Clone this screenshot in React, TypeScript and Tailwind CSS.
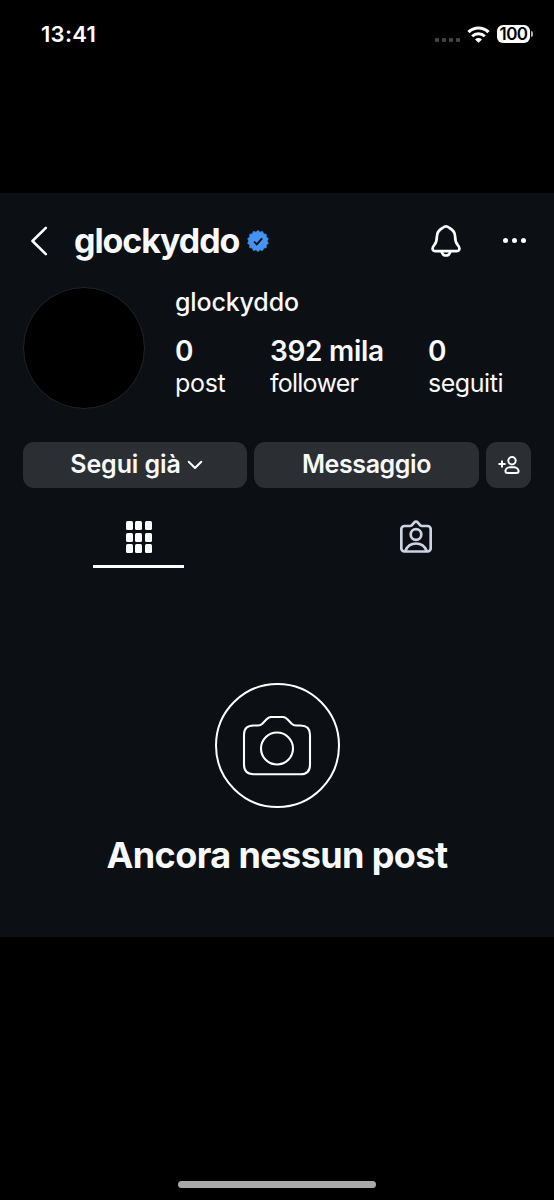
import React, { useState } from "react";

interface Stat {
  value: string;
  label: string;
  width: string;
  tracking: string;
}

const stats: Stat[] = [
  {
    value: "0",
    label: "post",
    width: "w-[95px]",
    tracking: "tracking-[-0.3px]",
  },
  {
    value: "392 mila",
    label: "follower",
    width: "w-[158px]",
    tracking: "tracking-[-0.75px]",
  },
  {
    value: "0",
    label: "seguiti",
    width: "w-[90px]",
    tracking: "tracking-[-0.45px]",
  },
];

const badgePoints = Array.from({ length: 28 }, (_, i) => {
  const r = i % 2 === 0 ? 10.6 : 9;
  const a = (i * Math.PI) / 14;
  return `${(11 + r * Math.sin(a)).toFixed(2)},${(11 - r * Math.cos(a)).toFixed(2)}`;
}).join(" ");

const VerifiedBadge = () => (
  <svg className="w-[22px] h-[22px]" viewBox="0 0 22 22">
    <polygon
      points={badgePoints}
      fill="#4494f4"
      stroke="#4494f4"
      strokeWidth="0.8"
      strokeLinejoin="round"
    />
    <path
      d="M7 11.6l2.8 2.7 5.3-5.9"
      fill="none"
      stroke="#0c1014"
      strokeWidth="1.9"
    />
  </svg>
);

const WifiIcon = () => (
  <svg className="w-[23px] h-[17px]" viewBox="0 0 23 17" fill="none">
    <path d="M1.5 6.1a14.2 14.2 0 0 1 20 0" stroke="white" strokeWidth="3.2" />
    <path d="M5.2 10.2a9 9 0 0 1 12.6 0" stroke="white" strokeWidth="3" />
    <path d="M11.5 16.8L8 13.4a5 5 0 0 1 7 0z" fill="white" />
  </svg>
);

const StatusBar = () => (
  <div className="flex h-[193px] items-start justify-between pl-[41px] pr-[21px] pt-[19px] text-white">
    <span className="text-[22px] leading-[30px] font-semibold tracking-[0.3px]">
      13:41
    </span>
    <div className="flex h-[30px] items-center">
      <div className="mr-[7px] mt-[11px] flex gap-[3px]">
        {[0, 1, 2, 3].map((dot) => (
          <span key={dot} className="h-1 w-1 rounded-[1px] bg-[#444444]" />
        ))}
      </div>
      <WifiIcon />
      <div className="ml-[7px] flex h-[18px] w-[33px] items-center justify-center rounded-[6px] bg-white text-[17px] leading-[18px] font-semibold tracking-[-0.6px] text-black">
        100
      </div>
      <span className="ml-px h-[6px] w-[2px] rounded-r-full bg-[#b0b0b0]" />
    </div>
  </div>
);

const Header = () => (
  <div className="flex h-[94px] items-center pl-[30px] pr-[28px] pt-px">
    <button className="cursor-pointer">
      <svg className="w-[18px] h-[30px]" viewBox="0 0 18 30" fill="none">
        <path
          d="M15.800 1.800L2.500 15l13.300 13.200"
          stroke="white"
          strokeWidth="2.6"
          strokeLinecap="round"
          strokeLinejoin="round"
        />
      </svg>
    </button>
    <h1 className="ml-[26px] mt-px w-[166px] text-[34px] leading-[44px] font-bold tracking-[-1.1px] whitespace-nowrap">
      glockyddo
    </h1>
    <div className="ml-[7px]">
      <VerifiedBadge />
    </div>
    <button className="ml-auto cursor-pointer">
      <svg className="w-[30px] h-[34px]" viewBox="0 0 30 34" fill="none">
        <path
          d="M15 2.400c-1.200 0-2.200.6-3.600 1.600C8 6 5.900 8.500 5.900 12.400c0 4.600-.8 6.600-2.700 8.800-2.600 2.800-2 6 1.400 6h20.800c3.400 0 4-3.200 1.400-6-1.900-2.200-2.700-4.200-2.700-8.800 0-3.900-2.100-6.400-5.500-8.400-1.400-1-2.400-1.600-3.600-1.600z"
          stroke="white"
          strokeWidth="2.7"
          strokeLinejoin="round"
        />
        <path
          d="M10.600 27.500c.6 2.500 2.300 4 4.400 4s3.800-1.500 4.400-4"
          stroke="white"
          strokeWidth="2.7"
        />
      </svg>
    </button>
    <button className="ml-[42px] flex cursor-pointer gap-[4px]">
      <span className="h-[5px] w-[5px] rounded-full bg-white" />
      <span className="h-[5px] w-[5px] rounded-full bg-white" />
      <span className="h-[5px] w-[5px] rounded-full bg-white" />
    </button>
  </div>
);

const ProfileInfo = () => (
  <div className="flex h-[155px] pl-[23px]">
    <div className="h-[122px] w-[122px] shrink-0 rounded-full border border-[#212427] bg-black" />
    <div className="ml-[30px]">
      <p className="text-[25px] leading-[30px] font-medium tracking-[-0.15px]">
        glockyddo
      </p>
      <div className="mt-[18px] flex">
        {stats.map((stat) => (
          <div key={stat.label} className={stat.width}>
            <p className="text-[28px] leading-[32px] font-semibold tracking-[-0.3px] whitespace-nowrap">
              {stat.value}
            </p>
            <p className={`text-[25px] leading-[32px] ${stat.tracking}`}>
              {stat.label}
            </p>
          </div>
        ))}
      </div>
    </div>
  </div>
);

const Actions = () => (
  <div className="flex h-[46px] gap-[7px] px-[23px] text-[25px] font-semibold">
    <button className="flex h-[46px] w-[224px] cursor-pointer items-center justify-center gap-[6px] rounded-[11px] bg-[#2b2f34] pl-[3px]">
      <span className="tracking-[-0.1px]">Segui già</span>
      <svg className="w-4 h-[10px]" viewBox="0 0 16 10" fill="none">
        <path
          d="M1.700 1.700L8 8l6.300-6.300"
          stroke="white"
          strokeWidth="2"
          strokeLinecap="round"
          strokeLinejoin="round"
        />
      </svg>
    </button>
    <button className="h-[46px] w-[225px] cursor-pointer rounded-[11px] bg-[#2b2f34] tracking-[-0.4px]">
      Messaggio
    </button>
    <button className="flex h-[46px] w-[45px] cursor-pointer items-center justify-center rounded-[11px] bg-[#2b2f34]">
      <svg className="w-[22px] h-[18px]" viewBox="0 0 22 18" fill="none">
        <g stroke="white" strokeWidth="2" strokeLinecap="round">
          <circle cx="14" cy="4.700" r="3.700" />
          <path d="M14 11c-3.700 0-6.600 1.700-6.600 4 0 1.300.8 1.900 2 1.900h9.200c1.200 0 2-.6 2-1.900 0-2.300-2.900-4-6.600-4z" />
          <path d="M1.200 8h5.600M4 5.200v5.600" />
        </g>
      </svg>
    </button>
  </div>
);

interface TabsProps {
  active: string;
  onChange: (tab: string) => void;
}

const Tabs = ({ active, onChange }: TabsProps) => (
  <div className="flex h-[80px]">
    <button
      onClick={() => onChange("grid")}
      className="flex w-[277px] cursor-pointer flex-col items-center justify-start pt-[33px]"
    >
      <span className="grid grid-cols-3 gap-x-[2.5px] gap-y-[2.5px]">
        {Array.from({ length: 9 }, (_, i) => (
          <span key={i} className="h-[9px] w-[7px] rounded-[1.5px] bg-white" />
        ))}
      </span>
      {active === "grid" && (
        <span className="mt-[12px] h-[3px] w-[91px] bg-white" />
      )}
    </button>
    <button
      onClick={() => onChange("tagged")}
      className="flex w-[277px] cursor-pointer flex-col items-center justify-start pt-[32px]"
    >
      <svg className="w-[32px] h-[33px]" viewBox="0 0 32 33" fill="none">
        <g stroke="#ccd3e3" strokeWidth="2.700" strokeLinejoin="round">
          <path d="M4.500 6h5.300c1 0 1.700-.4 2.400-1.200l1.900-2.200c1.100-1.300 2.700-1.300 3.800 0l1.900 2.200c.7.800 1.400 1.200 2.400 1.200h5.300a3.200 3.200 0 0 1 3.200 3.200v19.100a3.200 3.200 0 0 1-3.200 3.200H4.500a3.200 3.200 0 0 1-3.200-3.200V9.200A3.200 3.200 0 0 1 4.500 6z" />
          <circle cx="16" cy="14.500" r="5.300" />
          <path d="M5.200 31c1.900-4.700 6-7.500 10.800-7.500s8.900 2.800 10.800 7.500" />
        </g>
      </svg>
      {active === "tagged" && (
        <span className="mt-[11px] h-[3px] w-[91px] bg-white" />
      )}
    </button>
  </div>
);

const EmptyState = () => (
  <div className="flex flex-col items-center pt-[115px]">
    <div className="flex h-[125px] w-[125px] items-center justify-center rounded-full border-2 border-white">
      <svg className="w-[70px] h-[60px]" viewBox="0 0 70 60" fill="none">
        <g stroke="white" strokeWidth="2.100">
          <path d="M11.500 9.500h4.500c2 0 3-.6 4.300-1.800l4.300-4.400C26.300 1.600 27.300 1 29.300 1h11.400c2 0 3 .6 4.700 2.300l4.300 4.400c1.300 1.200 2.300 1.800 4.300 1.800h4.500c6.300 0 9.500 3.200 9.500 9.200v30c0 6.300-3.200 9.500-9.500 9.500h-47c-6.300 0-9.500-3.200-9.500-9.500v-30c0-6 3.200-9.200 9.500-9.200z" />
          <circle cx="35" cy="32.500" r="16" />
        </g>
      </svg>
    </div>
    <h2 className="mt-[22px] text-[36px] leading-[50px] font-bold tracking-[-0.6px] whitespace-nowrap">
      Ancora nessun post
    </h2>
  </div>
);

const App = () => {
  const [activeTab, setActiveTab] = useState("grid");

  return (
    <div className="flex h-[1200px] w-[554px] flex-col overflow-hidden bg-black font-['Inter',sans-serif]">
      <StatusBar />

      {/* Profile */}
      <main className="h-[744px] shrink-0 bg-[#0c1014] text-[#f8f9fb]">
        <Header />
        <ProfileInfo />
        <Actions />
        <Tabs active={activeTab} onChange={setActiveTab} />
        <EmptyState />
      </main>

      {/* Home indicator */}
      <div className="mt-auto mb-[12px] h-[7px] w-[198px] self-center rounded-full bg-[#a9a9a9]" />
    </div>
  );
};

export default App;
